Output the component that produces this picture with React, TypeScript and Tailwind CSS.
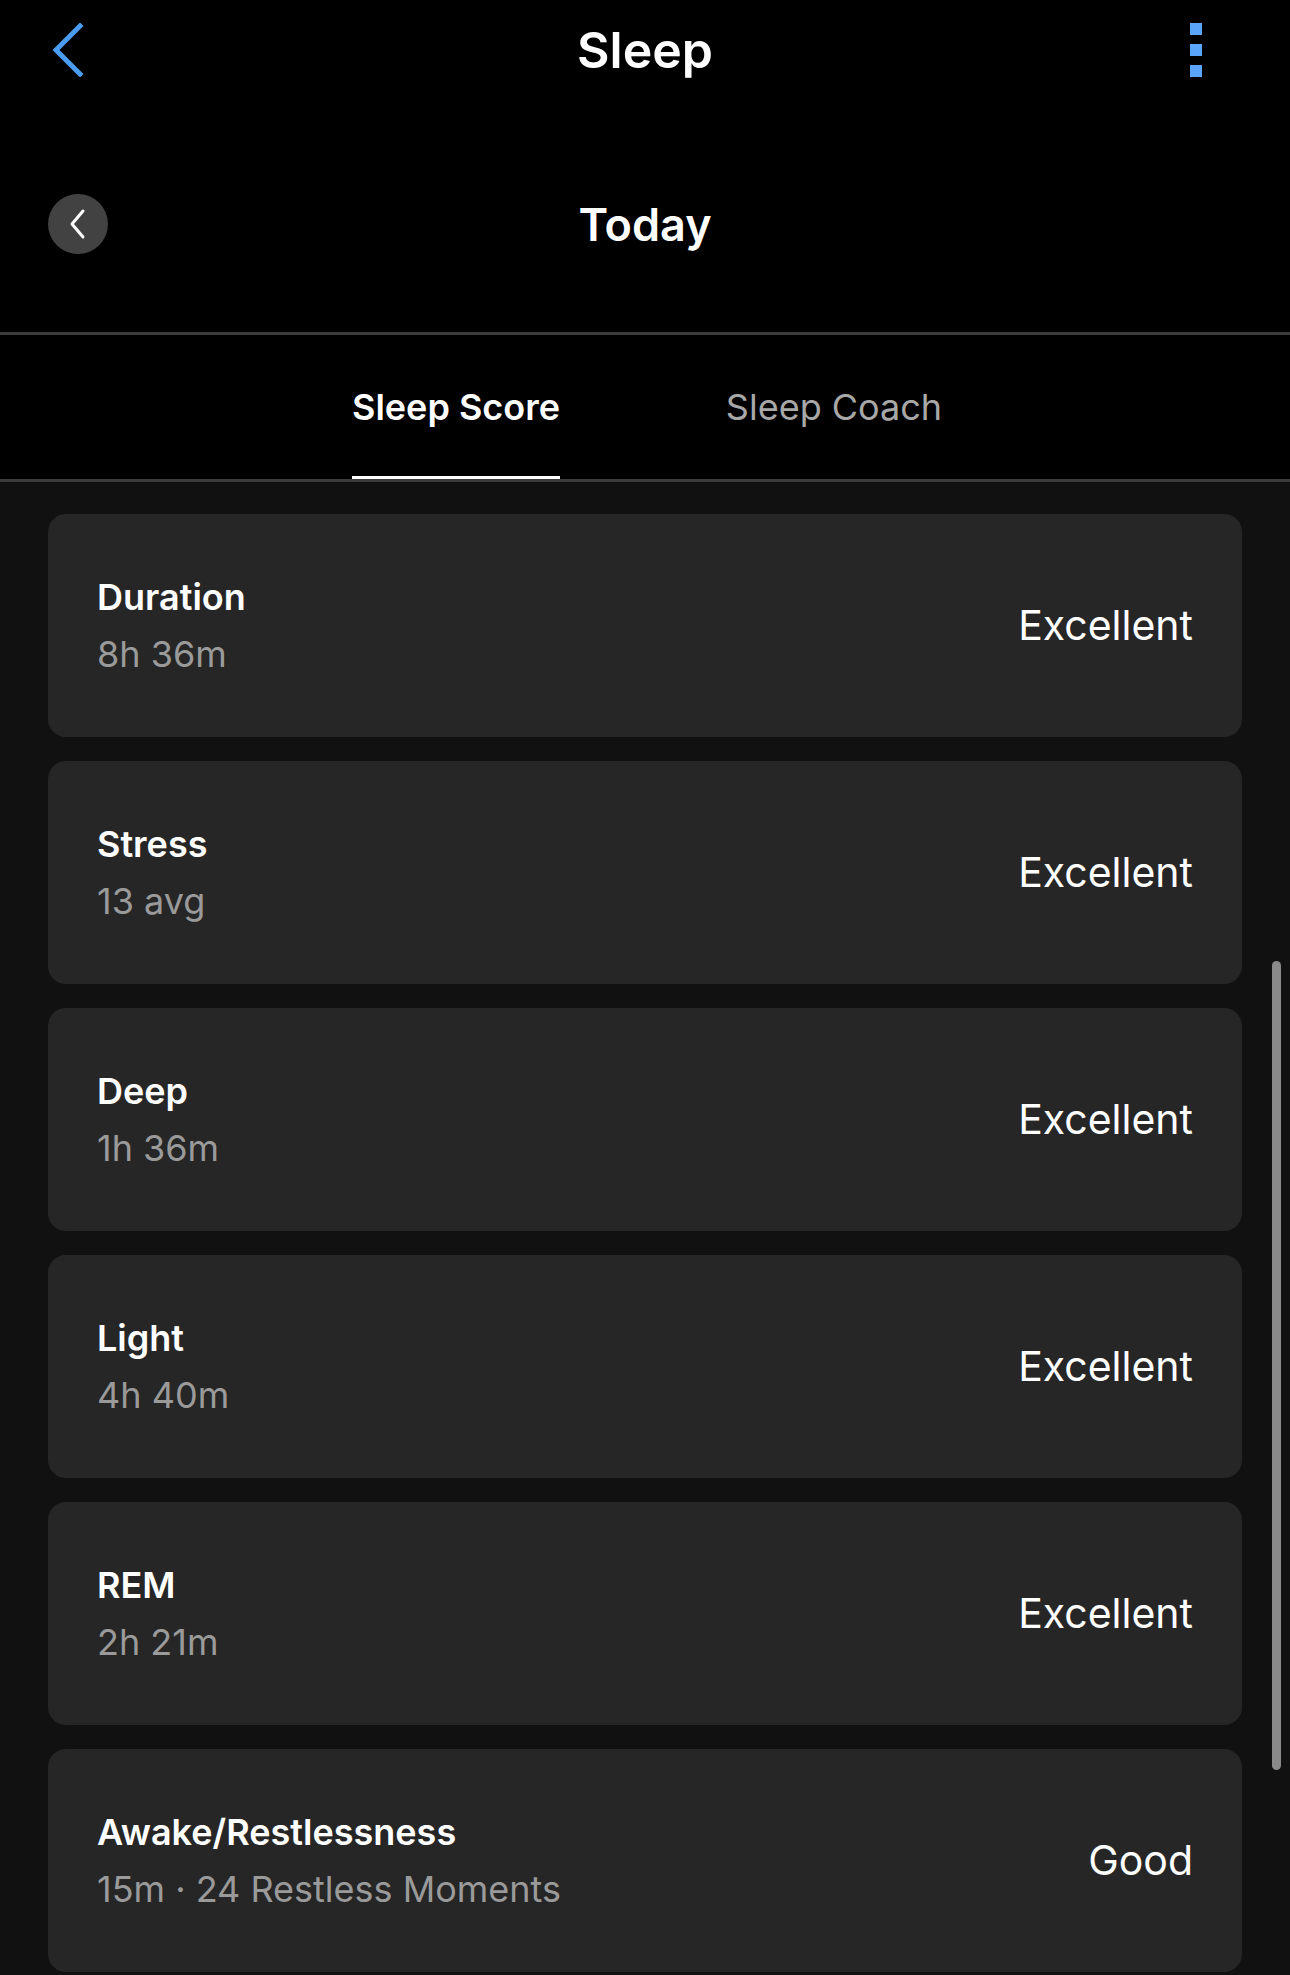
type Row = { title: string; detail: string; rating: string };

const rows: Row[] = [
  { title: 'Duration', detail: '8h 36m', rating: 'Excellent' },
  { title: 'Stress', detail: '13 avg', rating: 'Excellent' },
  { title: 'Deep', detail: '1h 36m', rating: 'Excellent' },
  { title: 'Light', detail: '4h 40m', rating: 'Excellent' },
  { title: 'REM', detail: '2h 21m', rating: 'Excellent' },
  { title: 'Awake/Restlessness', detail: '15m · 24 Restless Moments', rating: 'Good' },
];

// 顶部导航栏
function TopBar() {
  return (
    <div className="relative flex h-[100px] items-center justify-between pl-[50px] pr-[88px]">
      <svg width="34" height="54" viewBox="0 0 34 54" fill="none">
        <path d="M30 3 L6 27 L30 51" stroke="#4a9cf2" strokeWidth="5" strokeLinecap="square" />
      </svg>
      <h1 className="pointer-events-none absolute left-0 right-0 text-center text-[50px] font-semibold leading-none text-white">
        Sleep
      </h1>
      <div className="flex flex-col gap-[9px]">
        <span className="block h-[12px] w-[12px] bg-[#5aa5fa]" />
        <span className="block h-[12px] w-[12px] bg-[#5aa5fa]" />
        <span className="block h-[12px] w-[12px] bg-[#5aa5fa]" />
      </div>
    </div>
  );
}

// 日期切换
function DateRow() {
  return (
    <div className="relative mt-[64px] mb-[48px] flex h-[120px] items-center px-[48px]">
      <button className="flex h-[60px] w-[60px] items-center justify-center rounded-full bg-[#424242]">
        <svg width="22" height="32" viewBox="0 0 22 32" fill="none">
          <path d="M16 3 L5 16 L16 29" stroke="white" strokeWidth="3" strokeLinecap="round" strokeLinejoin="round" />
        </svg>
      </button>
      <div className="absolute left-0 right-0 text-center text-[45px] font-semibold leading-none text-white">
        Today
      </div>
    </div>
  );
}

function Tabs() {
  return (
    <div className="flex h-[150px] justify-center border-y-[3px] border-[#3c3c3c]">
      <div className="flex h-full w-[378px] justify-center">
        <div className="relative flex h-full items-center text-[36px] font-semibold text-white">
          Sleep Score
          <span className="absolute bottom-0 left-0 right-0 h-[3px] bg-white" />
        </div>
      </div>
      <div className="flex h-full w-[378px] items-center justify-center text-[36px] text-[#a8a8a8]">
        Sleep Coach
      </div>
    </div>
  );
}

function ScoreCard({ row }: { row: Row }) {
  return (
    <div className="flex h-[223px] items-center justify-between rounded-[18px] bg-[#262626] px-[49px]">
      <div className="flex flex-col gap-[13px]">
        <div className="text-[36px] font-semibold leading-[44px] text-white">{row.title}</div>
        <div className="text-[36px] leading-[44px] text-[#9a9a9a]">{row.detail}</div>
      </div>
      <div className="text-[41px] leading-none text-white">{row.rating}</div>
    </div>
  );
}

export default function App() {
  return (
    <div
      className="relative min-h-[1975px] w-[1290px] overflow-hidden bg-black"
      style={{ fontFamily: 'Inter, "Liberation Sans", sans-serif' }}
    >
      <TopBar />
      <DateRow />
      <Tabs />

      <div className="relative flex min-h-[1493px] flex-col gap-[24px] bg-[#111111] px-[48px] pt-[32px]">
        {rows.map((row) => (
          <ScoreCard key={row.title} row={row} />
        ))}
        {/* 滚动条 */}
        <div className="absolute right-[9px] top-[479px] h-[809px] w-[9px] rounded-full bg-[#8a8a8a]" />
      </div>
    </div>
  );
}
